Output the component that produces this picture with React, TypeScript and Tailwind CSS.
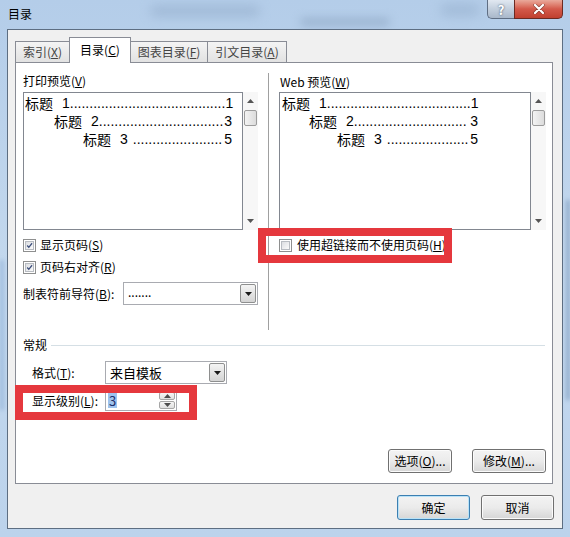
import React from "react";

const FONT = "font-['Noto_Sans_CJK_SC','Microsoft_YaHei',sans-serif]";

function CheckBox({ checked }: { checked?: boolean }) {
  return (
    <div className="w-[13px] h-[13px] border border-[#8e8f8f] bg-white p-[1px] shrink-0">
      <div className="relative w-full h-full border border-[#b8bcc2] bg-gradient-to-br from-[#dcdee2] to-[#fbfbfb]">
        {checked && (
          <svg viewBox="0 0 9 9" className="absolute inset-0 w-full h-full">
            <path d="M1.5 4.5 L3.6 6.8 L7.8 1.6" fill="none" stroke="#3d4f7c" strokeWidth="1.6" />
          </svg>
        )}
      </div>
    </div>
  );
}

function DownTri({ up }: { up?: boolean }) {
  return (
    <svg width="7" height="4" viewBox="0 0 7 4">
      {up ? <path d="M0 4 L3.5 0 L7 4 Z" fill="#4d4d4d" /> : <path d="M0 0 L7 0 L3.5 4 Z" fill="#1a1a1a" />}
    </svg>
  );
}

function Combo({ width, text, textClass }: { width: string; text: string; textClass?: string }) {
  return (
    <div className={`${width} h-[23px] border border-[#a9abb1] bg-white flex items-stretch`}>
      <div className={`flex-1 flex items-center pl-[4px] ${textClass ?? "text-[13px]"}`}>{text}</div>
      <div className="w-[16px] my-[1px] mr-[1px] border border-[#8e8f8f] rounded-[2px] bg-gradient-to-b from-[#f4f4f4] to-[#d4d4d4] flex items-center justify-center">
        <DownTri />
      </div>
    </div>
  );
}

function ScrollBar() {
  return (
    <div className="w-[15px] h-full bg-[#f7f7f7] flex flex-col items-center">
      <div className="h-[18px] w-full flex items-center justify-center">
        <svg width="7" height="4" viewBox="0 0 7 4">
          <path d="M0 4 L3.5 0 L7 4 Z" fill="#555" />
        </svg>
      </div>
      <div className="w-[13px] h-[16px] border border-[#9c9c9c] rounded-[2px] bg-gradient-to-r from-[#f3f3f3] to-[#dcdcdc]" />
      <div className="flex-1" />
      <div className="h-[18px] w-full flex items-center justify-center">
        <svg width="7" height="4" viewBox="0 0 7 4">
          <path d="M0 0 L7 0 L3.5 4 Z" fill="#555" />
        </svg>
      </div>
    </div>
  );
}

function TocLine({ indent, width, num, page, dots, spaced }: { indent: string; width: string; num: string; page: string; dots: number; spaced?: boolean }) {
  return (
    <div className={`${indent} ${width} h-[18px] flex items-center justify-between whitespace-nowrap text-[14px] leading-[18px]`}>
      <span className="flex items-center">
        <span>标题</span>
        <span className="ml-[9px] font-['Liberation_Sans',sans-serif]">{num}</span>
        <span className={`font-['Liberation_Sans',sans-serif] ${spaced ? "ml-[5px]" : ""}`}>{".".repeat(dots)}</span>
      </span>
      <span className="font-['Liberation_Sans',sans-serif]">{page}</span>
    </div>
  );
}

function Preview({
  boxW,
  widths,
  dots,
  i2,
  i3,
  pl,
}: {
  boxW: string;
  widths: [string, string, string];
  dots: [number, number, number];
  i2: string;
  i3: string;
  pl: string;
}) {
  return (
    <div className="mt-[3px] h-[138px] flex">
      <div className={`${boxW} h-full border border-[#828790] bg-white ${pl} pt-[1px]`}>
        <TocLine indent="" width={widths[0]} num="1" page="1" dots={dots[0]} />
        <TocLine indent={i2} width={widths[1]} num="2" page="3" dots={dots[1]} />
        <TocLine indent={i3} width={widths[2]} num="3" page="5" dots={dots[2]} spaced />
      </div>
      <ScrollBar />
    </div>
  );
}

function Btn({ w, children, def }: { w: string; children: React.ReactNode; def?: boolean }) {
  return (
    <div
      className={`${w} rounded-[3px] border ${
        def ? "border-[#3c7fb1] shadow-[inset_0_0_0_1px_#b8e2f8]" : "border-[#707070] shadow-[inset_0_0_0_1px_#fbfbfb]"
      } bg-gradient-to-b from-[#f3f3f3] via-[#ebebeb] to-[#d6d6d6] flex items-center justify-center text-[12px]`}
    >
      {children}
    </div>
  );
}

export default function App() {
  return (
    <div className={`${FONT} relative w-[570px] h-[537px] overflow-hidden bg-gradient-to-b from-[#b4cde9] via-[#c3d8ee] to-[#bcd3ec] text-black text-[12px] leading-[16px] flex flex-col`}>
      {/* blurred glass decoration */}
      <div className="absolute left-[150px] top-[6px] w-[110px] h-[10px] rounded-full bg-[#8ea8c6] blur-[6px] opacity-60" />
      <div className="absolute left-[300px] top-[18px] w-[90px] h-[8px] rounded-full bg-[#7f98b5] blur-[5px] opacity-50" />
      <div className="absolute left-[440px] top-[4px] w-[40px] h-[12px] rounded-full bg-[#8ea8c6] blur-[6px] opacity-50" />
      <div className="absolute left-0 top-[260px] w-[4px] h-[150px] bg-[#8fb0d6] blur-[2px] opacity-70" />
      <div className="absolute right-0 top-[200px] w-[4px] h-[200px] bg-[#6f8fb3] blur-[2px] opacity-60" />

      {/* title bar */}
      <div className="relative h-[29px] flex items-start justify-between pl-[8px] pr-[7px]">
        <span className="mt-[6px]">目录</span>
        <div className="flex">
          <div className="w-[27px] h-[19px] rounded-bl-[5px] border border-[#5f6e83] border-t-0 border-r-0 bg-gradient-to-b from-[#e1e8f1] via-[#c3cfdd] to-[#a9b8ca] flex items-center justify-center">
            <span className="text-white font-bold text-[13px] leading-none [text-shadow:0_0_2px_#2c3e55]">?</span>
          </div>
          <div className="w-[49px] h-[19px] rounded-br-[5px] border border-[#6b2a22] border-t-0 bg-gradient-to-b from-[#e9a99b] via-[#d3594a] to-[#c0402f] flex items-center justify-center">
            <svg width="12" height="10" viewBox="0 0 12 10">
              <path d="M2 1 L10 9 M10 1 L2 9" stroke="#3b1712" strokeWidth="3.6" strokeLinecap="round" opacity="0.45" />
              <path d="M2 1 L10 9 M10 1 L2 9" stroke="#ffffff" strokeWidth="2.2" strokeLinecap="round" />
            </svg>
          </div>
        </div>
      </div>

      {/* client area */}
      <div className="relative ml-[7px] w-[556px] h-[500px] border border-[#5d6e82] bg-[#f0f0f0] pt-[7px] pl-[7px] flex flex-col">
        {/* tabs */}
        <div className="relative z-10 h-[25px] flex items-end">
          <div className="w-[55px] h-[21px] border border-[#898c95] border-b-0 bg-gradient-to-b from-[#f4f4f4] to-[#e2e2e2] flex items-center justify-center text-[#444]">
            索引(<u>X</u>)
          </div>
          <div className="w-[62px] h-[26px] -mb-[1px] -ml-[1px] border border-[#898c95] border-b-0 bg-white flex items-start justify-center pt-[4px]">
            目录(<u>C</u>)
          </div>
          <div className="w-[78px] h-[21px] -ml-[1px] border border-[#898c95] border-b-0 bg-gradient-to-b from-[#f4f4f4] to-[#e2e2e2] flex items-center justify-center text-[#444]">
            图表目录(<u>F</u>)
          </div>
          <div className="w-[80px] h-[21px] -ml-[1px] border border-[#898c95] border-b-0 bg-gradient-to-b from-[#f4f4f4] to-[#e2e2e2] flex items-center justify-center text-[#444]">
            引文目录(<u>A</u>)
          </div>
        </div>

        {/* tab panel */}
        <div className="relative w-[538px] h-[422px] border border-[#898c95] bg-white flex flex-col">
          {/* top section */}
          <div className="mt-[10px] h-[257px] flex">
            {/* left column */}
            <div className="ml-[7px] w-[235px] flex flex-col">
              <div className="h-[16px]">打印预览(<u>V</u>)</div>
              <Preview
                boxW="w-[220px]"
                widths={["w-[207px]", "w-[178px]", "w-[149px]"]}
                dots={[40, 32, 23]}
                i2="ml-[29px]"
                i3="ml-[58px]"
                pl="pl-[1px]"
              />
              <div className="mt-[7px] h-[16px] flex items-center gap-[4px]">
                <CheckBox checked />
                <span>显示页码(<u>S</u>)</span>
              </div>
              <div className="mt-[6px] h-[16px] flex items-center gap-[4px]">
                <CheckBox checked />
                <span>页码右对齐(<u>R</u>)</span>
              </div>
              <div className="mt-[7px] flex items-center">
                <span className="w-[100px]">制表符前导符(<u>B</u>):</span>
                <Combo width="w-[135px]" text="......." textClass="text-[12px] -mt-[4px]" />
              </div>
            </div>
            {/* divider */}
            <div className="ml-[10px] w-px bg-[#a0a0a0]" />
            {/* right column */}
            <div className="ml-[10px] w-[267px] flex flex-col">
              <div className="h-[16px] pl-[1px] mt-[1px] -mb-[1px]">Web 预览(<u>W</u>)</div>
              <Preview
                boxW="w-[252px]"
                widths={["w-[196px]", "w-[169px]", "w-[141px]"]}
                dots={[37, 29, 21]}
                i2="ml-[27px]"
                i3="ml-[55px]"
                pl="pl-[2px]"
              />
              <div className="mt-[7px] h-[16px] flex items-center gap-[5px]">
                <CheckBox />
                <span>使用超链接而不使用页码(<u>H</u>)</span>
              </div>
            </div>
          </div>

          {/* 常规 group */}
          <div className="mt-[7px] h-[16px] flex items-center pl-[7px] pr-[7px]">
            <span>常规</span>
            <div className="ml-[4px] flex-1 h-px bg-[#d5dfe5]" />
          </div>
          <div className="mt-[8px] flex items-center pl-[16px]">
            <span className="w-[73px]">格式(<u>T</u>):</span>
            <Combo width="w-[122px]" text="来自模板" textClass="text-[13px]" />
          </div>
          <div className="mt-[6px] flex items-center pl-[16px]">
            <span className="w-[73px]">显示级别(<u>L</u>):</span>
            <div className="w-[72px] h-[21px] border border-[#a9abb1] bg-white flex items-stretch">
              <div className="flex-1 flex items-center pl-[2px]">
                <span className="bg-[#9ec3ee] text-[#1b2f6b] text-[13px] leading-[15px] px-[1px]">3</span>
              </div>
              <div className="w-[16px] my-[1px] mr-[1px] flex flex-col gap-[1px]">
                <div className="flex-1 border border-[#a6a6a6] rounded-[2px] bg-gradient-to-b from-[#f6f6f6] to-[#e0e0e0] flex items-center justify-center">
                  <DownTri up />
                </div>
                <div className="flex-1 border border-[#a6a6a6] rounded-[2px] bg-gradient-to-b from-[#f6f6f6] to-[#e0e0e0] flex items-center justify-center">
                  <svg width="7" height="4" viewBox="0 0 7 4">
                    <path d="M0 0 L7 0 L3.5 4 Z" fill="#4d4d4d" />
                  </svg>
                </div>
              </div>
            </div>
          </div>

          <div className="mt-auto mb-[10px] pr-[6px] flex justify-end gap-[20px]">
            <div className="h-[24px] flex">
              <Btn w="w-[64px]">选项(<u>O</u>)...</Btn>
            </div>
            <div className="h-[24px] flex">
              <Btn w="w-[74px]">修改(<u>M</u>)...</Btn>
            </div>
          </div>

          {/* annotation boxes */}
          <div className="absolute left-[242px] top-[165px] w-[194px] h-[35px] border-[8px] border-[#e5383d]" />
          <div className="absolute -left-[1px] top-[322px] w-[182px] h-[35px] border-[8px] border-[#e5383d]" />
        </div>

        {/* dialog buttons */}
        <div className="mt-[11px] pr-[8px] flex justify-end gap-[11px]">
          <div className="h-[25px] flex">
            <Btn w="w-[73px]" def>确定</Btn>
          </div>
          <div className="h-[25px] flex">
            <Btn w="w-[73px]">取消</Btn>
          </div>
        </div>
      </div>
    </div>
  );
}
